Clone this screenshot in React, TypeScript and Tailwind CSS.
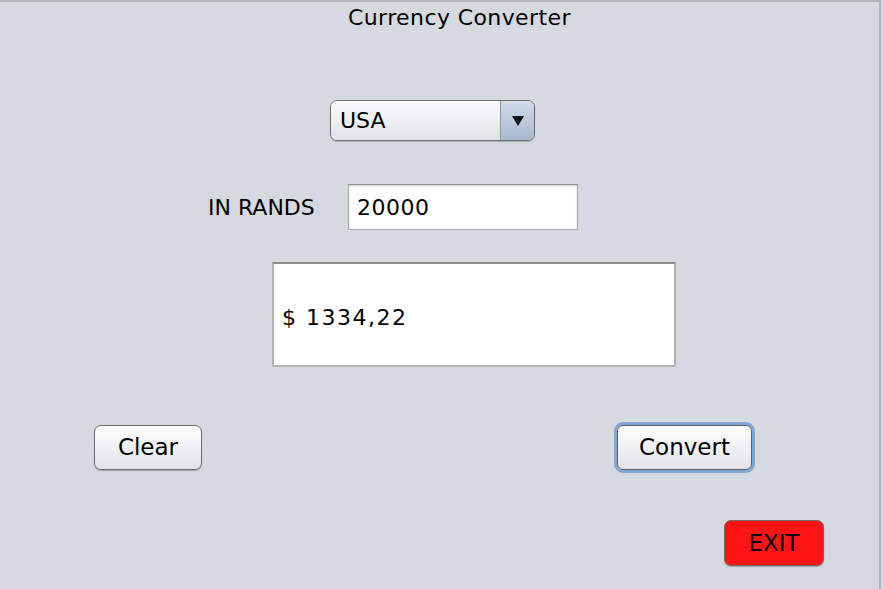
import React from "react";

function AquaButton({ label, focused }: { label: string; focused?: boolean }) {
  if (focused) {
    return (
      <div className="rounded-[9px] border-[3px] border-[#7fa7d6]">
        <button className="flex h-[45px] w-[135px] items-center justify-center rounded-[6px] border border-[#5f5f5f] bg-gradient-to-b from-[#fdfdfd] via-[#f1f1f3] to-[#e2e3e8] text-[23px] text-black">
          {label}
        </button>
      </div>
    );
  }
  return (
    <button className="mt-[3px] flex h-[45px] w-[108px] items-center justify-center rounded-[7px] border border-[#6e6e6e] bg-gradient-to-b from-[#fdfdfd] via-[#f1f1f3] to-[#e2e3e8] text-[23px] text-black shadow-[0_1px_1px_rgba(0,0,0,0.25)]">
      {label}
    </button>
  );
}

export default function App() {
  return (
    <div
      className="h-[589px] w-[884px] overflow-hidden bg-[#d6d9e0]"
      style={{ fontFamily: '"DejaVu Sans", "Liberation Sans", sans-serif' }}
    >
      <div className="h-[589px] w-[881px] border-r-2 border-t-2 border-[#b4b6ba]">
        {/* title */}
        <div className="ml-[348px] pt-[2px] text-[22px] leading-[28px] tracking-[0.4px] text-black">
          Currency Converter
        </div>

        {/* country select */}
        <div className="ml-[330px] mt-[68px] flex h-[41px] w-[205px] overflow-hidden rounded-[7px] border border-[#6c6c6c] shadow-[0_1px_1px_rgba(0,0,0,0.2)]">
          <div className="flex flex-1 items-center bg-gradient-to-b from-[#fbfbfc] via-[#eff0f2] to-[#dfe1e6] pl-[9px] text-[22px] text-black">
            USA
          </div>
          <div className="flex w-[34px] items-center justify-center border-l border-[#8a96a4] bg-gradient-to-b from-[#d3dde8] via-[#bccadb] to-[#a7b9cd]">
            <svg width="12" height="10" viewBox="0 0 12 10">
              <path d="M0 0h12L6 10z" fill="#111" />
            </svg>
          </div>
        </div>

        {/* input row */}
        <div className="ml-[208px] mt-[43px] flex items-center">
          <span className="w-[140px] text-[22px] text-black">IN RANDS</span>
          <div className="flex h-[46px] w-[230px] items-center border border-[#a9a9a9] border-t-[#8f8f8f] bg-white pl-[8px] text-[22px] tracking-[0.5px] text-black shadow-[inset_0_1px_2px_rgba(0,0,0,0.2)]">
            20000
          </div>
        </div>

        {/* result */}
        <div className="ml-[272px] mt-[32px] flex h-[105px] w-[404px] items-center border-2 border-[#b3b3b3] border-t-[#8f8f8f] bg-white pl-[8px] pt-[6px] text-[22px] tracking-[1.5px] text-black">
          $ 1334,22
        </div>

        {/* buttons */}
        <div className="ml-[94px] mt-[55px] flex w-[661px] items-start justify-between">
          <AquaButton label="Clear" />
          <AquaButton label="Convert" focused />
        </div>

        {/* exit */}
        <div className="ml-[724px] mt-[47px]">
          <button className="flex h-[46px] w-[100px] items-center justify-center rounded-[7px] border border-[#6e6e6e] bg-[#ff1414] text-[23px] text-black shadow-[0_1px_1px_rgba(0,0,0,0.25)]">
            EXIT
          </button>
        </div>
      </div>
    </div>
  );
}
